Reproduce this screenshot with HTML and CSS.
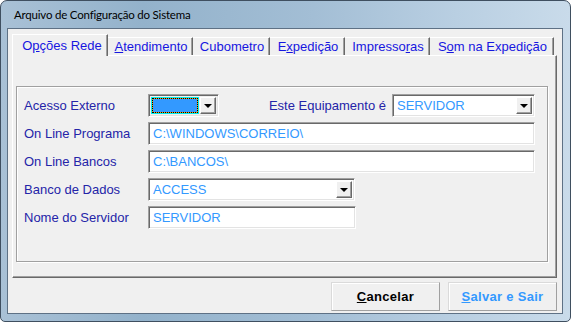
FILE: index.html
```html
<!DOCTYPE html>
<html lang="pt">
<head>
    <meta charset="UTF-8">
    <title>Arquivo de Configuração do Sistema</title>
    <link rel="stylesheet" href="styles.css">
</head>
<body>
    <div class="window">
        <div class="titlebar">Arquivo de Configuração do Sistema</div>

        <div class="client">
            <div class="pages">
                <div class="tabs">
                    <div class="tab active" style="width: 96px">O<u>p</u>ções Rede</div>
                    <div class="tab" style="width: 85px"><u>A</u>tendimento</div>
                    <div class="tab" style="width: 77px">Cubometro</div>
                    <div class="tab" style="width: 75px">E<u>x</u>pedição</div>
                    <div class="tab" style="width: 85px">Impresso<u>r</u>as</div>
                    <div class="tab" style="width: 124px">S<u>o</u>m na Expedição</div>
                </div>

                <div class="page">
                    <div class="bevel">
                        <div class="row">
                            <label class="lbl">Acesso Externo</label>
                            <div class="combo combo-small">
                                <div class="sel"><div class="focus"></div></div>
                                <div class="drop"><span class="arrow"></span></div>
                            </div>
                            <label class="lbl lbl-right">Este Equipamento é</label>
                            <div class="combo combo-equip">
                                <div class="val">SERVIDOR</div>
                                <div class="drop"><span class="arrow"></span></div>
                            </div>
                        </div>
                        <div class="row">
                            <label class="lbl">On Line Programa</label>
                            <div class="edit edit-wide">C:\WINDOWS\CORREIO\</div>
                        </div>
                        <div class="row">
                            <label class="lbl">On Line Bancos</label>
                            <div class="edit edit-wide">C:\BANCOS\</div>
                        </div>
                        <div class="row">
                            <label class="lbl">Banco de Dados</label>
                            <div class="combo combo-db">
                                <div class="val">ACCESS</div>
                                <div class="drop"><span class="arrow"></span></div>
                            </div>
                        </div>
                        <div class="row">
                            <label class="lbl">Nome do Servidor</label>
                            <div class="edit edit-short">SERVIDOR</div>
                        </div>
                    </div>
                </div>
            </div>

            <div class="footer">
                <button class="btn"><u>C</u>ancelar</button>
                <button class="btn btn-save"><u>S</u>alvar e Sair</button>
            </div>
        </div>
    </div>
</body>
</html>
```

FILE: styles.css
```css
body {
    margin: 0;
    background: #ffffff;
    font-family: "Liberation Sans", Arial, sans-serif;
    font-size: 13px;
}

.window {
    width: 571px;
    height: 322px;
    box-sizing: border-box;
    border: 1px solid #3f4f60;
    border-radius: 7px 7px 5px 5px;
    background: linear-gradient(90deg, #a9c1d6 0%, #93b2cb 25%, #a3bed5 55%, #b9cfe2 80%, #c9dbea 100%);
    padding: 0 7px 7px 6px;
    display: flex;
    flex-direction: column;
}

.titlebar {
    height: 27px;
    line-height: 28px;
    padding-left: 7px;
    font-family: Lato, sans-serif;
    font-size: 11.5px;
    letter-spacing: -0.2px;
    color: #000;
}

.client {
    height: 286px;
    box-sizing: border-box;
    border: 1px solid #5e7185;
    background: #f0f0f0;
    display: flex;
    flex-direction: column;
}

.pages {
    width: 545px;
    margin: 5px 0 0 4px;
}

.tabs {
    display: flex;
    align-items: flex-end;
    height: 21px;
}

.tab {
    box-sizing: border-box;
    height: 18px;
    border-top: 1px solid #ffffff;
    border-right: 1px solid #696969;
    box-shadow: inset -1px 0 0 #a0a0a0;
    color: #1616e0;
    text-align: center;
    line-height: 17px;
    padding-left: 2px;
    white-space: nowrap;
}

.tab.active {
    border-left: 1px solid #ffffff;
    position: relative;
    z-index: 1;
    height: 22px;
    margin-bottom: -1px;
    line-height: 21px;
    padding-left: 4px;
    background: #f0f0f0;
}

.page {
    box-sizing: border-box;
    height: 223px;
    border-top: 1px solid #ffffff;
    border-left: 1px solid #ffffff;
    border-right: 1px solid #696969;
    border-bottom: 1px solid #696969;
    box-shadow: inset -1px -1px 0 #a0a0a0;
    padding: 30px 0 0 3px;
}

.bevel {
    box-sizing: border-box;
    width: 532px;
    height: 176px;
    border: 1px solid #a0a0a0;
    box-shadow: 1px 1px 0 #ffffff, inset 1px 1px 0 #ffffff;
    padding: 7px 0 0 7px;
    display: flex;
    flex-direction: column;
    gap: 5px;
}

.row {
    display: flex;
    align-items: center;
    height: 23px;
}

.lbl {
    width: 124px;
    flex-shrink: 0;
    color: #2424a8;
}

.lbl-right {
    width: 173px;
    text-align: right;
    padding-right: 6px;
    box-sizing: border-box;
}

.edit, .combo {
    box-sizing: border-box;
    height: 23px;
    background: #ffffff;
    border-style: solid;
    border-width: 1px;
    border-color: #a0a0a0 #ffffff #ffffff #a0a0a0;
    box-shadow: inset 1px 1px 0 #696969, inset -1px -1px 0 #e3e3e3;
    color: #3399ff;
}

.edit {
    padding: 2px 0 0 4px;
    line-height: 17px;
}

.edit-wide { width: 387px; }
.edit-short { width: 208px; }

.combo {
    display: flex;
    padding: 2px;
}

.combo-small { width: 71px; background: #f0f0f0; }
.combo-equip { width: 143px; }
.combo-db { width: 207px; }

.combo .val {
    flex: 1;
    padding-left: 2px;
    line-height: 17px;
}

.sel {
    flex: 1;
    border: 1px solid #00f0f0;
    background: #ff9a00;
    margin-right: 1px;
}

.focus {
    height: 100%;
    box-sizing: border-box;
    border: 1px dotted #000000;
    background: #3399ff;
    background-clip: padding-box;
}

.drop {
    box-sizing: border-box;
    width: 16px;
    background: #f0f0f0;
    border-style: solid;
    border-width: 1px;
    border-color: #ffffff #696969 #696969 #ffffff;
    box-shadow: inset -1px -1px 0 #a0a0a0;
    display: flex;
    align-items: center;
    justify-content: center;
}

.arrow {
    width: 0;
    height: 0;
    border-left: 4px solid transparent;
    border-right: 4px solid transparent;
    border-top: 4px solid #000000;
    margin: 1px 1px 0 0;
}

.footer {
    display: flex;
    justify-content: flex-end;
    gap: 8px;
    padding: 4px 5px 0 0;
}

.btn {
    width: 109px;
    height: 29px;
    box-sizing: border-box;
    border-style: solid;
    border-width: 1px;
    border-color: #dadada #a0a0a0 #a0a0a0 #dadada;
    box-shadow: inset 1px 1px 0 #ffffff;
    background: #f0f0f0;
    font-family: "Liberation Sans", Arial, sans-serif;
    font-size: 13px;
    font-weight: bold;
    letter-spacing: 0.3px;
    color: #000000;
    padding: 0;
}

.btn-save {
    color: #3399ff;
}
```
